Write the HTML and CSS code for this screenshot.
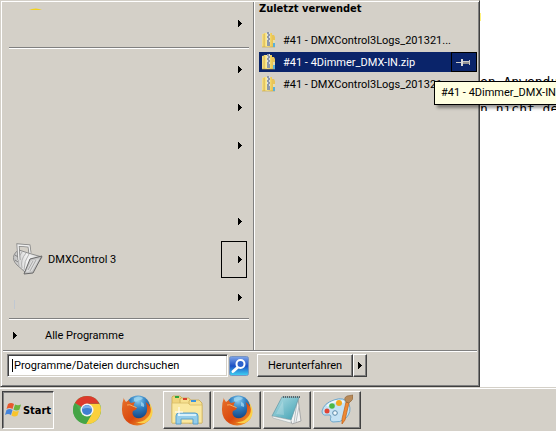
FILE: index.html
```html
<!DOCTYPE html>
<html lang="de">
<head>
    <meta charset="UTF-8">
    <meta name="viewport" content="width=device-width, initial-scale=1.0">
    <title>Startmenü</title>
    <link rel="stylesheet" href="styles.css">
</head>
<body>
    <!-- Shared shapes -->
    <svg class="defs" width="0" height="0" aria-hidden="true">
        <defs>
            <linearGradient id="zipFill" x1="0" x2="1">
                <stop offset="0" stop-color="#f0d060"/>
                <stop offset="0.4" stop-color="#fff2a8"/>
                <stop offset="1" stop-color="#ecc850"/>
            </linearGradient>
            <linearGradient id="foxFill" x1="0" y1="0" x2="1" y2="1">
                <stop offset="0" stop-color="#e8722a"/>
                <stop offset="0.55" stop-color="#d9480f"/>
                <stop offset="1" stop-color="#f9b233"/>
            </linearGradient>
            <radialGradient id="globeFill" cx="0.5" cy="0.2" r="0.8">
                <stop offset="0" stop-color="#8fd0f0"/>
                <stop offset="0.4" stop-color="#2f7fc0"/>
                <stop offset="1" stop-color="#123a78"/>
            </radialGradient>
            <linearGradient id="noteFill" x1="0" y1="0" x2="1" y2="1">
                <stop offset="0" stop-color="#b5e0e6"/>
                <stop offset="1" stop-color="#3d9fb2"/>
            </linearGradient>
            <linearGradient id="metal" x1="0" x2="1">
                <stop offset="0" stop-color="#c0c0c0"/>
                <stop offset="0.5" stop-color="#f4f4f4"/>
                <stop offset="1" stop-color="#d0d0d0"/>
            </linearGradient>
            <symbol id="arrow" viewBox="0 0 4 7">
                <path d="M0 0h1v1h1v1h1v1h1v1h-1v1h-1v1h-1v1h-1z"/>
            </symbol>
            <symbol id="zip" viewBox="0 0 16 16">
                <path d="M10 3h3l1 2v10h-4z" fill="#e8c458"/>
                <path d="M1 2l4-1v14H1z" fill="#f4dc84"/>
                <path d="M3 1h8v14H3z" fill="url(#zipFill)"/>
                <path d="M1 15h13M3 2v13" stroke="#c8a440" stroke-width="0.6"/>
                <path d="M6 0h3v10H6z" fill="#d4dce8"/>
                <path d="M6 1h2M7 3h2M6 5h2M7 7h2M6 9h2" stroke="#44506c"/>
                <path d="M6 10h3v4H6z" fill="#8c98ac"/>
                <path d="M13 8v5" stroke="#e8f8fc"/>
                <path d="M12 11h2v4h-2z" fill="#58b0dc"/>
            </symbol>
            <symbol id="firefox" viewBox="0 0 32 32">
                <circle cx="17" cy="14" r="12.5" fill="url(#globeFill)"/>
                <path d="M13 4q5-3 9 0q-2 3-5 2q-1 3-4 1zM20 8q4 1 3 5l-3-1z" fill="#a8dcf2" opacity="0.7"/>
                <path d="M3 5l2 3 3-2q0 2 2 3l4-1q-2 3-1 5l3 1q-.5 2-4 3q-1.500 3.500 1.500 6q4 2.500 8.500 0q4.500-3 4-9q0-3-1.500-6q6 4 6.500 9.500q0 8-7 12q-8 4-15.500 0q-8-5-7.500-15q0-6 2-11z" fill="url(#foxFill)"/>
                <path d="M27 6.500q6 10-.5 17q-5 5.500-12 4.500q8 3.500 14-2q7-8-1.500-19.500z" fill="#fbd04a"/>
                <path d="M4 12q-1 9 6 13q-7-4-6-13z" fill="#f39a3e"/>
                <path d="M6 11q3-1 5.500 1l4 1.500" fill="none" stroke="#f8ae60"/>
            </symbol>
        </defs>
    </svg>

    <main class="desktop">
        <section class="start-menu" aria-label="Startmenü">
            <div class="panes">
                <nav class="programs">
                    <div class="program">
                        <span class="program-icon">
                            <svg class="fill" viewBox="0 0 30 32"><path d="M16 3l3-1q4-1 7 0l3 1z" fill="#f2d21c"/></svg>
                        </span>
                        <button class="more" aria-label="Mehr"><svg class="arrow"><use href="#arrow"/></svg></button>
                    </div>
                    <hr class="rule rule-pinned">
                    <div class="program">
                        <button class="more" aria-label="Mehr"><svg class="arrow"><use href="#arrow"/></svg></button>
                    </div>
                    <div class="program">
                        <button class="more" aria-label="Mehr"><svg class="arrow"><use href="#arrow"/></svg></button>
                    </div>
                    <div class="program">
                        <button class="more" aria-label="Mehr"><svg class="arrow"><use href="#arrow"/></svg></button>
                    </div>
                    <div class="program"></div>
                    <div class="program">
                        <button class="more" aria-label="Mehr"><svg class="arrow"><use href="#arrow"/></svg></button>
                    </div>
                    <div class="program">
                        <a class="program-link" href="#dmxcontrol">
                            <span class="program-icon">
                                <svg class="fill" viewBox="0 0 30 32">
                                    <path d="M1 12q1-3 5-5l9 3 14 4-10 15-7 0L4 22Q-1 17 1 12z" fill="url(#metal)" stroke="#8c8c8c"/>
                                    <path d="M9 9q-5 6-3 14M13 10q-6 7-4 15M16 11q-5 7-5 16" fill="none" stroke="#b0b0b0"/>
                                    <path d="M2 12l3 2M2 17l3 2" stroke="#808080"/>
                                    <path d="M17 16l12-3-9 17-9 1z" fill="#c4c4c4" stroke="#686868"/>
                                    <path d="M18 18l8-2-7 12-6 1z" fill="#dedede"/>
                                    <path d="M20 18l-5 9M23 17l-6 11" stroke="#a8a8a8"/>
                                    <path d="M6 17L5 2l11 1 1 7" fill="none" stroke="#858585" stroke-width="3"/>
                                    <path d="M6 17L5 2l11 1 1 7" fill="none" stroke="#f0f0f0" stroke-width="1.4"/>
                                </svg>
                            </span>
                            DMXControl 3
                        </a>
                        <button class="more more-open" aria-label="Mehr zu DMXControl 3"><svg class="arrow"><use href="#arrow"/></svg></button>
                    </div>
                    <div class="program">
                        <span class="program-icon">
                            <svg class="fill" viewBox="0 0 30 32"><path d="M1 19h1v9H1z" fill="#c0c8d2"/></svg>
                        </span>
                        <button class="more" aria-label="Mehr"><svg class="arrow"><use href="#arrow"/></svg></button>
                    </div>
                    <hr class="rule rule-all">
                    <a class="all-programs" href="#alle"><svg class="arrow"><use href="#arrow"/></svg>Alle Programme</a>
                </nav>

                <div class="recent">
                    <h2>Zuletzt verwendet</h2>
                    <ul>
                        <li><a href="#log1"><svg class="zip"><use href="#zip"/></svg>#41 - DMXControl3Logs_201321...</a></li>
                        <li class="selected">
                            <a href="#dimmer"><svg class="zip"><use href="#zip"/></svg>#41 - 4Dimmer_DMX-IN.zip</a>
                            <button class="pin" aria-label="Anheften">
                                <svg width="16" height="9" viewBox="0 0 16 9">
                                    <path d="M0 4h6v1H0z" fill="#c8c8c8"/>
                                    <path d="M5 1h2v7H5z" fill="#d8d8d8"/>
                                    <path d="M7 3h6v3H7z" fill="#909090"/>
                                    <path d="M7 3h6v1H7zM13 2h1v5h-1z" fill="#c8c8c8"/>
                                </svg>
                            </button>
                            <div class="tooltip" role="tooltip">#41 - 4Dimmer_DMX-IN</div>
                        </li>
                        <li><a href="#log2"><svg class="zip"><use href="#zip"/></svg>#41 - DMXControl3Logs_201321...</a></li>
                    </ul>
                </div>
            </div>

            <form class="menu-footer">
                <div class="search">
                    <span class="caret"></span>
                    <input type="text" aria-label="Programme/Dateien durchsuchen" placeholder="Programme/Dateien durchsuchen">
                </div>
                <button class="search-button" type="button" aria-label="Suchen">
                    <svg width="20" height="20" viewBox="0 0 20 20">
                        <defs>
                            <linearGradient id="searchFill" x1="0" y1="0" x2="0" y2="1">
                                <stop offset="0" stop-color="#7fa6ea"/>
                                <stop offset="0.5" stop-color="#1c50c4"/>
                                <stop offset="1" stop-color="#40d4f4"/>
                            </linearGradient>
                        </defs>
                        <rect x="0.5" y="0.5" width="19" height="19" rx="2" fill="url(#searchFill)" stroke="#7894c0"/>
                        <path d="M8.500 11.500L4 15.500" stroke="#fff" stroke-width="3" stroke-linecap="round"/>
                        <circle cx="11.500" cy="8" r="4" fill="#2d62cc" stroke="#fff" stroke-width="2"/>
                    </svg>
                </button>
                <div class="shutdown">
                    <button type="button" class="shutdown-main">Herunterfahren</button>
                    <button type="button" class="shutdown-more" aria-label="Weitere Optionen"><svg class="arrow"><use href="#arrow"/></svg></button>
                </div>
            </form>
        </section>

        <!-- Window behind the menu -->
        <article class="document">
            <span class="mark"></span>
            <p>en Anwendu</p>
            <p>n nicht de</p>
        </article>
    </main>

    <footer class="taskbar">
        <button class="task start">
            <svg width="17" height="16" viewBox="0 0 17 16">
                <path d="M3 2q3-2 6 0L7.500 7q-3-2-6 0z" fill="#e8582c"/>
                <path d="M10 2.500q3 1.500 6 0L14.500 7.500q-3 2-6 0z" fill="#6cb43c"/>
                <path d="M1.500 8q3-2 6 0L6 13q-3-2-6 0z" fill="#4484dc"/>
                <path d="M8 8.500q3 2 6 0L12.500 13.500q-3 2-6 0z" fill="#f8c42c"/>
            </svg>
            Start
        </button>
        <button class="task flat" aria-label="Chrome">
            <svg width="30" height="30" viewBox="0 0 30 30">
                <circle cx="15" cy="15" r="14" fill="#4caf50"/>
                <path d="M15 15L2.900 8A14 14 0 0 1 27.500 8.800H15z" fill="#dc3a2c"/>
                <path d="M15 9h12.600A14 14 0 0 1 14 29l6.500-11z" fill="#fbd03c"/>
                <path d="M2.900 8L9.500 18.500 14 29A14 14 0 0 1 2.900 8z" fill="#45a446"/>
                <path d="M9.500 18.500l5 3 5-2L14 29z" fill="#45a446"/>
                <circle cx="15" cy="15" r="6.500" fill="#f4f4f4"/>
                <circle cx="15" cy="15" r="5" fill="#3f7fd0"/>
                <path d="M10.500 14a4.600 4.600 0 0 1 9 0q-4-2-9 0z" fill="#7db0ea"/>
            </svg>
        </button>
        <button class="task flat" aria-label="Firefox"><svg width="32" height="32"><use href="#firefox"/></svg></button>
        <button class="task" aria-label="Explorer">
            <svg width="32" height="32" viewBox="0 0 32 32">
                <path d="M1 29V3l1-1h7l2 2v25z" fill="#f0d47c" stroke="#c8a850" stroke-width="0.8"/>
                <path d="M4 2h4v2H4z" fill="#2ea43c"/>
                <path d="M9 29V5l1-1h8l2 3v22z" fill="#f6e090" stroke="#c8a850" stroke-width="0.8"/>
                <path d="M12 4h4v2h-4z" fill="#d84030"/>
                <path d="M18 29V7l1-1h9l3 3v20z" fill="#f6e090" stroke="#c8a850" stroke-width="0.8"/>
                <path d="M20 6h5v2h-5z" fill="#3c94dc"/>
                <path d="M1 9h16l2 2h12v18H1z" fill="#fae8a0" stroke="#d8bc68" stroke-width="0.8"/>
                <path d="M5 30V22q0-3 3-3h16q3 0 3 3v8h-5v-5H10v5z" fill="#94cdea" stroke="#5aa0cc"/>
                <path d="M7 21h18" stroke="#d8f0fa" stroke-width="2"/>
                <path d="M8 13v9M4 18h8" stroke="#fff"/>
            </svg>
        </button>
        <button class="task" aria-label="Firefox-Fenster"><svg width="32" height="32"><use href="#firefox"/></svg></button>
        <button class="task" aria-label="Editor">
            <svg width="32" height="32" viewBox="0 0 32 32">
                <path d="M27 4l3 23-9 3-2-5z" fill="#f4f4f4" stroke="#a8a8a8"/>
                <path d="M26 8l-3 21M28 12l-3 16" stroke="#b8c0c4"/>
                <path d="M11 3h17l-8 23-19-4z" fill="url(#noteFill)" stroke="#689ca8" stroke-width="0.8"/>
                <path d="M1 22l19 4v3L2 24z" fill="#f0f4f4" stroke="#98a4a8" stroke-width="0.5"/>
                <path d="M12 3h17" stroke="#5c6468" stroke-width="2" stroke-dasharray="1 1"/>
                <path d="M12 7L5 20l8 1z" fill="#fff" opacity="0.2"/>
            </svg>
        </button>
        <button class="task" aria-label="Paint">
            <svg width="32" height="32" viewBox="0 0 32 32">
                <path d="M13 6q10-4 15 4q3 8-3 14q-6 5-13 4q-4-1-2-5q0-3-4-2q-5 1-5-4q2-8 12-11z" fill="#c4e2f4" stroke="#70a8cc"/>
                <path d="M6 12q8-7 17-4" fill="none" stroke="#eef8fe" stroke-width="2"/>
                <circle cx="6" cy="17" r="2.500" fill="#e04434"/>
                <circle cx="11" cy="12" r="2.800" fill="#4cb848"/>
                <circle cx="18" cy="9" r="3" fill="#f4a820"/>
                <circle cx="14" cy="19" r="2.300" fill="#f0f8fc" stroke="#5888a8"/>
                <path d="M25 8l3 1-4 17-3 4 0-5z" fill="#ee8a34" stroke="#c06018" stroke-width="0.7"/>
                <path d="M25 8q-3-4 1-6l6-1q1 5-4 8z" fill="#b98a58" stroke="#8a6238" stroke-width="0.6"/>
            </svg>
        </button>
    </footer>
</body>
</html>
```
FILE: styles.css
```css
* {
    box-sizing: border-box;
}

body {
    margin: 0;
    min-height: 100vh;
    display: flex;
    flex-direction: column;
    overflow: hidden;
    background-color: #fff;
    color: #000;
    font-family: Roboto, sans-serif;
    font-size: 11px;
}

button {
    margin: 0;
    padding: 0;
    border: none;
    background: none;
    color: inherit;
    font: inherit;
}

a {
    color: inherit;
    text-decoration: none;
}

.defs {
    position: absolute;
}

.arrow {
    width: 4px;
    height: 7px;
    flex: none;
}

.desktop {
    flex: 1;
    display: flex;
    align-items: flex-start;
}

/* Start menu */
.start-menu {
    flex: 1 0 auto;
    max-width: 480px;
    background-color: #d4d0c8;
    border: 1px solid;
    border-color: #d4d0c8 #404040 #404040 #d4d0c8;
    box-shadow: inset 1px 1px #fff, inset -1px -1px #808080;
    padding: 1px;
}

.panes {
    display: grid;
    grid-template-columns: 251px 1fr;
}

.programs {
    padding-top: 2px;
}

.program {
    display: flex;
    align-items: center;
    height: 38px;
    padding: 0 6px 0 11px;
}

.program-link {
    display: flex;
    align-items: center;
    gap: 5px;
}

.program-icon {
    width: 30px;
    height: 32px;
}

.fill {
    display: block;
    width: 100%;
    height: 100%;
}

.more {
    display: flex;
    align-items: center;
    justify-content: flex-end;
    width: 26px;
    height: 37px;
    margin-left: auto;
    padding-right: 4px;
    border: 1px solid transparent;
}

.more-open {
    border-color: #000;
}

.rule {
    height: 2px;
    border: none;
    border-top: 1px solid #808080;
    background-color: #fff;
}

.rule-pinned {
    margin: 5px 4px 1px 7px;
}

.rule-all {
    margin: 2px 4px 0 7px;
}

.all-programs {
    display: flex;
    align-items: center;
    gap: 28px;
    height: 30px;
    padding-left: 11px;
}

/* Recent files */
.recent {
    border-left: 1px solid #808080;
    box-shadow: inset 1px 0 #fff;
    padding-left: 5px;
}

.recent h2 {
    margin: 0;
    height: 28px;
    font-family: "DejaVu Sans Condensed", "DejaVu Sans", sans-serif;
    font-size: 11px;
    line-height: 14px;
}

.recent ul {
    display: grid;
    gap: 2px;
    margin: 0;
    padding: 0;
    list-style: none;
}

.recent li {
    position: relative;
    display: flex;
    height: 20px;
    margin-right: 1px;
}

.recent a {
    flex: 1;
    display: flex;
    align-items: center;
    gap: 6px;
    padding-left: 2px;
    white-space: nowrap;
}

.zip {
    width: 16px;
    height: 16px;
}

.recent .selected {
    background-color: #0a246a;
    color: #fff;
}

.pin {
    display: flex;
    align-items: center;
    justify-content: center;
    width: 26px;
    border: 1px solid #000;
}

.tooltip {
    position: absolute;
    z-index: 1;
    top: 29px;
    left: 175px;
    width: 122px;
    padding-left: 6px;
    border: 1px solid #000;
    border-right: none;
    background-color: #ffffe1;
    box-shadow: 3px 3px 3px rgba(0, 0, 0, 0.4);
    color: #000;
    line-height: 22px;
    white-space: nowrap;
}

/* Search and shutdown */
.menu-footer {
    display: flex;
    align-items: center;
    margin: 0 1px;
    padding: 3px 4px 8px;
    border-top: 1px solid #808080;
    box-shadow: inset 0 1px #fff;
}

.search {
    display: flex;
    align-items: center;
    width: 221px;
    height: 23px;
    padding: 0 4px;
    border: 1px solid;
    border-color: #808080 #fff #fff #808080;
    background-color: #fff;
    box-shadow: inset 1px 1px #404040, inset -1px -1px #d4d0c8;
}

.caret {
    width: 1px;
    height: 13px;
    background-color: #000;
}

.search input {
    flex: 1;
    min-width: 0;
    padding: 0 0 0 1px;
    border: none;
    outline: none;
    background: none;
    font: inherit;
}

.search input::placeholder {
    color: #000;
    opacity: 1;
}

.search-button {
    height: 20px;
    margin: 0 8px 0 1px;
}

.shutdown {
    display: flex;
}

.shutdown-main,
.shutdown-more,
.task {
    border: 1px solid;
    border-color: #fff #404040 #404040 #fff;
    box-shadow: inset -1px -1px #808080;
}

.shutdown-main {
    height: 23px;
    padding: 0 10px;
}

.shutdown-more {
    display: flex;
    align-items: center;
    justify-content: center;
    width: 14px;
    height: 23px;
}

/* Window behind the menu */
.document {
    flex: 1 1 0;
    min-width: 0;
    height: 111px;
    overflow: hidden;
    font-family: "DejaVu Sans Mono", monospace;
    font-size: 13px;
    line-height: 27px;
    white-space: nowrap;
}

.document p {
    margin: 0;
}

.mark {
    display: block;
    width: 1px;
    height: 8px;
    margin: 13px 0 47px;
    background-color: #fff27c;
}

/* Taskbar */
.taskbar {
    display: flex;
    gap: 2px;
    padding: 3px 2px 2px;
    border-top: 1px solid #d4d0c8;
    background-color: #d4d0c8;
    box-shadow: inset 0 1px #fff;
}

.task {
    display: flex;
    align-items: center;
    justify-content: center;
    width: 48px;
    height: 38px;
}

.start {
    gap: 1px;
    width: 52px;
    margin-right: 7px;
    border-color: #404040 #fff #fff #404040;
    box-shadow: inset 1px 1px #808080;
    font-family: "DejaVu Sans Condensed", "DejaVu Sans", sans-serif;
    font-weight: bold;
}

.flat {
    border-color: transparent;
    box-shadow: none;
}
```
